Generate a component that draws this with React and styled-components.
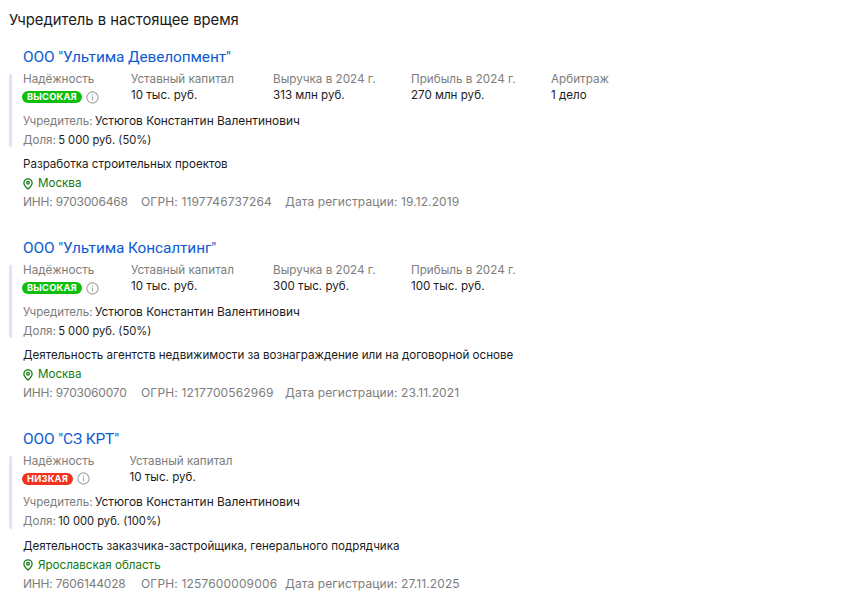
import React from "react";
import styled, { createGlobalStyle } from "styled-components";

const Global = createGlobalStyle`
  html, body { margin: 0; padding: 0; background: #fff; }
  body { font-family: Inter, "Noto Sans", sans-serif; color: #1c1c1c; }
`;
const Page = styled.div`
  width: 864px; height: 606px; overflow: hidden; box-sizing: border-box;
  padding: 11px 0 0 9px;
`;
const Heading = styled.h2`
  margin: 0 0 17px; font-size: 14.8px; line-height: 19px; font-weight: 400; color: #1a1a1a;
`;
const Company = styled.section`
  height: 190.75px; display: flex; flex-direction: column;
`;
const Title = styled.a`
  margin-left: 14px; font-family: Roboto, sans-serif; font-size: 15.4px; line-height: 20px; letter-spacing: -0.1px;
  color: #0d5bd3; text-decoration: none; align-self: flex-start; white-space: nowrap;
`;
const Founder = styled.div`
  margin-top: 7.3px; border-left: 3px solid #dfe2fb; border-radius: 2px; padding-left: 11px;
  display: flex; flex-direction: column; height: 73px; box-sizing: border-box;
`;
const Metrics = styled.div`display: flex; margin: -2px 0 7.5px;`;
const Metric = styled.div`
  display: flex; flex-direction: column; flex: none; width: ${p => p.$w}px;
`;
const Label = styled.div`font-size: 11.7px; line-height: 15px; color: #7d7d7d; white-space: nowrap;`;
const Value = styled.div`font-size: 11.6px; line-height: 16px; color: #1c1c1c; white-space: nowrap;`;
const BadgeRow = styled.div`display: flex; align-items: center; gap: 4px; height: 12px; margin-top: 4px; white-space: nowrap;`;
const Badge = styled.span`
  background: ${p => p.$bg}; color: #fff; font-size: 9.3px; line-height: 12px; font-weight: 700;
  letter-spacing: .2px; padding: 0 5px; border-radius: 6px; margin-left: -1px; height: 12px;
`;
const Line = styled.div`font-size: 11.6px; line-height: 19px; color: #1c1c1c; white-space: nowrap;`;
const Muted = styled.span`color: #7d7d7d; font-size: 11.6px; margin-right: -1px;`;
const Person = styled.span`font-size: 11.9px;`;
const Share = styled.span`font-size: 11.2px;`;
const Body = styled.div`margin-left: 14px; margin-top: 8px; display: flex; flex-direction: column;`;
const City = styled.div`
  display: flex; align-items: center; gap: 5px; font-size: 11.6px; line-height: 19px; color: #137a13;
`;
const Ids = styled.div`
  display: flex; font-size: 12px; line-height: 17.5px; color: #7d7d7d; white-space: nowrap;
`;
const Id = styled.span`flex: none; width: ${p => p.$w}px; letter-spacing: ${p => p.$ls}px;`;

const Info = () => (
  <svg width="13" height="13" viewBox="0 0 13 13" fill="none" stroke="#a3a3a3" strokeWidth="1.1">
    <circle cx="6.5" cy="6.5" r="5.6" />
    <path d="M6.5 5.6v3.8M6.5 3.2v1.2" />
  </svg>
);
const Pin = () => (
  <svg width="10" height="12" viewBox="0 0 11 13" fill="none" stroke="#137a13" strokeWidth="1.4">
    <path d="M5.5 12C3 9.8 1 7.8 1 5.3a4.5 4.5 0 0 1 9 0C10 7.8 8 9.8 5.5 12Z" />
    <circle cx="5.5" cy="5.2" r="1.5" />
  </svg>
);

const data = [
  { name: 'ООО "Ультима Девелопмент"', level: "ВЫСОКАЯ", bg: "#0cbf0c", w: 108,
    metrics: [["Уставный капитал", "10 тыс. руб.", 142], ["Выручка в 2024 г.", "313 млн руб.", 138], ["Прибыль в 2024 г.", "270 млн руб.", 140], ["Арбитраж", "1 дело", 100]],
    share: "5 000 руб. (50%)", activity: "Разработка строительных проектов", city: "Москва",
    inn: "9703006468", ogrn: "1197746737264", date: "19.12.2019" },
  { name: 'ООО "Ультима Консалтинг"', level: "ВЫСОКАЯ", bg: "#0cbf0c", w: 108,
    metrics: [["Уставный капитал", "10 тыс. руб.", 142], ["Выручка в 2024 г.", "300 тыс. руб.", 138], ["Прибыль в 2024 г.", "100 тыс. руб.", 140]],
    share: "5 000 руб. (50%)", activity: "Деятельность агентств недвижимости за вознаграждение или на договорной основе", city: "Москва",
    inn: "9703060070", ogrn: "1217700562969", date: "23.11.2021" },
  { name: 'ООО "СЗ КРТ"', level: "НИЗКАЯ", bg: "#f0321e", w: 106.5,
    metrics: [["Уставный капитал", "10 тыс. руб.", 142]],
    share: "10 000 руб. (100%)", activity: "Деятельность заказчика-застройщика, генерального подрядчика", city: "Ярославская область",
    inn: "7606144028", ogrn: "1257600009006", date: "27.11.2025" },
];

export default function App() {
  return (
    <Page>
      <Global />
      <Heading>Учредитель в настоящее время</Heading>
      {data.map(c => (
        <Company key={c.inn}>
          <Title>{c.name}</Title>
          <Founder>
            <Metrics>
              <Metric $w={c.w}>
                <Label>Надёжность</Label>
                <BadgeRow><Badge $bg={c.bg}>{c.level}</Badge><Info /></BadgeRow>
              </Metric>
              {c.metrics.map(([l, v, w]) => (
                <Metric key={l} $w={w}><Label>{l}</Label><Value>{v}</Value></Metric>
              ))}
            </Metrics>
            <Line><Muted>Учредитель:</Muted> <Person>Устюгов Константин Валентинович</Person></Line>
            <Line><Muted>Доля:</Muted> <Share>{c.share}</Share></Line>
          </Founder>
          <Body>
            <Line>{c.activity}</Line>
            <City><Pin />{c.city}</City>
            <Ids>
              <Id $w={118} $ls={-0.2}>ИНН: {c.inn}</Id>
              <Id $w={144} $ls={0.15}>ОГРН: {c.ogrn}</Id>
              <Id $ls={0.1}>Дата регистрации: {c.date}</Id>
            </Ids>
          </Body>
        </Company>
      ))}
    </Page>
  );
}
